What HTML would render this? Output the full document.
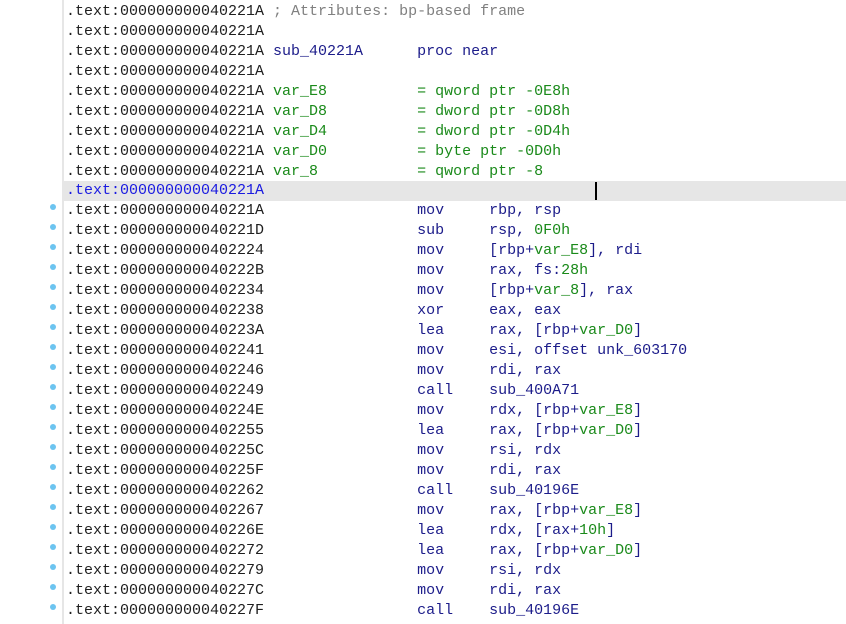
<!DOCTYPE html>
<html><head><meta charset="utf-8"><style>
html,body{margin:0;padding:0;background:#fff;width:846px;height:624px;overflow:hidden}
#g{position:absolute;left:62px;top:0;width:2px;height:624px;background:#e6e6e6}
.r{position:absolute;left:64px;width:782px;height:20px;font:15px/20px "Liberation Mono",monospace;color:#1e1e1e;white-space:pre;padding-left:2px;box-sizing:border-box}
.hl{background:#e6e6e6}
.d{position:absolute;left:50px;width:6px;height:6px;border-radius:3px;background:#6cc4f0}
.c{color:#808080}.n{color:#1c1c8a}.v{color:#1a8a1a}.b{color:#1a1ae0}
#cur{position:absolute;left:595px;top:182px;width:2px;height:18px;background:#000}
</style></head><body>
<div id="g"></div>
<div class="r" style="top:2px">.text:000000000040221A <span class="c">; Attributes: bp-based frame</span></div>
<div class="r" style="top:22px">.text:000000000040221A</div>
<div class="r" style="top:42px">.text:000000000040221A <span class="n">sub_40221A      proc near</span></div>
<div class="r" style="top:62px">.text:000000000040221A</div>
<div class="r" style="top:82px">.text:000000000040221A <span class="v">var_E8          = qword ptr -0E8h</span></div>
<div class="r" style="top:102px">.text:000000000040221A <span class="v">var_D8          = dword ptr -0D8h</span></div>
<div class="r" style="top:122px">.text:000000000040221A <span class="v">var_D4          = dword ptr -0D4h</span></div>
<div class="r" style="top:142px">.text:000000000040221A <span class="v">var_D0          = byte ptr -0D0h</span></div>
<div class="r" style="top:162px">.text:000000000040221A <span class="v">var_8           = qword ptr -8</span></div>
<div class="r hl b" style="top:181px">.text:000000000040221A</div>
<div id="cur"></div>
<div class="d" style="top:204px"></div><div class="r" style="top:201px">.text:000000000040221A                 <span class="n">mov     rbp, rsp</span></div>
<div class="d" style="top:224px"></div><div class="r" style="top:221px">.text:000000000040221D                 <span class="n">sub     rsp, <span class="v">0F0h</span></span></div>
<div class="d" style="top:244px"></div><div class="r" style="top:241px">.text:0000000000402224                 <span class="n">mov     [rbp+<span class="v">var_E8</span>], rdi</span></div>
<div class="d" style="top:264px"></div><div class="r" style="top:261px">.text:000000000040222B                 <span class="n">mov     rax, fs:<span class="v">28h</span></span></div>
<div class="d" style="top:284px"></div><div class="r" style="top:281px">.text:0000000000402234                 <span class="n">mov     [rbp+<span class="v">var_8</span>], rax</span></div>
<div class="d" style="top:304px"></div><div class="r" style="top:301px">.text:0000000000402238                 <span class="n">xor     eax, eax</span></div>
<div class="d" style="top:324px"></div><div class="r" style="top:321px">.text:000000000040223A                 <span class="n">lea     rax, [rbp+<span class="v">var_D0</span>]</span></div>
<div class="d" style="top:344px"></div><div class="r" style="top:341px">.text:0000000000402241                 <span class="n">mov     esi, offset unk_603170</span></div>
<div class="d" style="top:364px"></div><div class="r" style="top:361px">.text:0000000000402246                 <span class="n">mov     rdi, rax</span></div>
<div class="d" style="top:384px"></div><div class="r" style="top:381px">.text:0000000000402249                 <span class="n">call    sub_400A71</span></div>
<div class="d" style="top:404px"></div><div class="r" style="top:401px">.text:000000000040224E                 <span class="n">mov     rdx, [rbp+<span class="v">var_E8</span>]</span></div>
<div class="d" style="top:424px"></div><div class="r" style="top:421px">.text:0000000000402255                 <span class="n">lea     rax, [rbp+<span class="v">var_D0</span>]</span></div>
<div class="d" style="top:444px"></div><div class="r" style="top:441px">.text:000000000040225C                 <span class="n">mov     rsi, rdx</span></div>
<div class="d" style="top:464px"></div><div class="r" style="top:461px">.text:000000000040225F                 <span class="n">mov     rdi, rax</span></div>
<div class="d" style="top:484px"></div><div class="r" style="top:481px">.text:0000000000402262                 <span class="n">call    sub_40196E</span></div>
<div class="d" style="top:504px"></div><div class="r" style="top:501px">.text:0000000000402267                 <span class="n">mov     rax, [rbp+<span class="v">var_E8</span>]</span></div>
<div class="d" style="top:524px"></div><div class="r" style="top:521px">.text:000000000040226E                 <span class="n">lea     rdx, [rax+<span class="v">10h</span>]</span></div>
<div class="d" style="top:544px"></div><div class="r" style="top:541px">.text:0000000000402272                 <span class="n">lea     rax, [rbp+<span class="v">var_D0</span>]</span></div>
<div class="d" style="top:564px"></div><div class="r" style="top:561px">.text:0000000000402279                 <span class="n">mov     rsi, rdx</span></div>
<div class="d" style="top:584px"></div><div class="r" style="top:581px">.text:000000000040227C                 <span class="n">mov     rdi, rax</span></div>
<div class="d" style="top:604px"></div><div class="r" style="top:601px">.text:000000000040227F                 <span class="n">call    sub_40196E</span></div>
</body></html>
